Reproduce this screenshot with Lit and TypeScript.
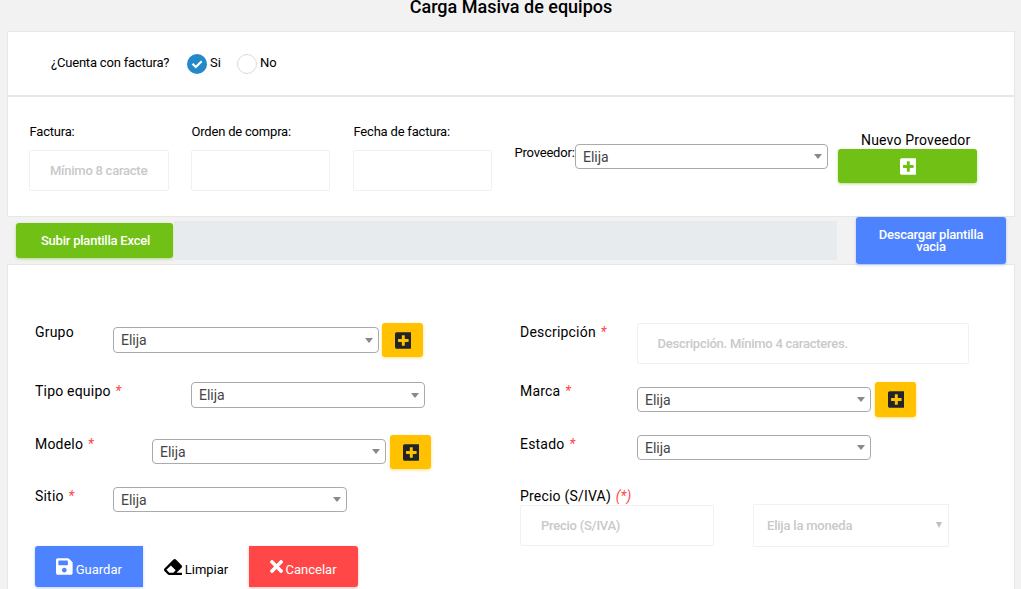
import { LitElement, html, css, svg } from "lit";
import { customElement } from "lit/decorators.js";

const plusPath =
  "M400 32H48C21.500 32 0 53.500 0 80v352c0 26.500 21.500 48 48 48h352c26.500 0 48-21.500 48-48V80c0-26.500-21.500-48-48-48zm-32 252c0 6.600-5.400 12-12 12h-92v92c0 6.600-5.400 12-12 12h-56c-6.600 0-12-5.400-12-12v-92H92c-6.600 0-12-5.400-12-12v-56c0-6.600 5.400-12 12-12h92v-92c0-6.600 5.400-12 12-12h56c6.600 0 12 5.400 12 12v92h92c6.600 0 12 5.400 12 12v56z";
const savePath =
  "M433.941 129.941l-83.882-83.882A48 48 0 0 0 316.118 32H48C21.490 32 0 53.490 0 80v352c0 26.510 21.490 48 48 48h352c26.510 0 48-21.490 48-48V163.882a48 48 0 0 0-14.059-33.941zM224 416c-35.346 0-64-28.654-64-64 0-35.346 28.654-64 64-64s64 28.654 64 64c0 35.346-28.654 64-64 64zm96-304.520V212c0 6.627-5.373 12-12 12H76c-6.627 0-12-5.373-12-12V108c0-6.627 5.373-12 12-12h228.520c3.183 0 6.235 1.264 8.485 3.515l3.480 3.480A11.996 11.996 0 0 1 320 111.480z";
const eraserPath =
  "M497.941 273.941c18.745-18.745 18.745-49.137 0-67.882l-160-160c-18.745-18.745-49.136-18.746-67.883 0l-256 256c-18.745 18.745-18.745 49.137 0 67.882l96 96A48.004 48.004 0 0 0 144 480h356c6.627 0 12-5.373 12-12v-40c0-6.627-5.373-12-12-12H355.883l142.058-142.059zm-302.627-62.627l137.373 137.373L265.373 416H150.628l-80-80 124.686-124.686z";
const timesPath =
  "M242.720 256l100.070-100.070c12.280-12.280 12.280-32.190 0-44.480l-22.240-22.240c-12.280-12.280-32.190-12.280-44.480 0L176 189.280 75.930 89.210c-12.280-12.280-32.190-12.280-44.480 0L9.210 111.450c-12.280 12.280-12.280 32.190 0 44.480L109.280 256 9.210 356.070c-12.280 12.280-12.280 32.190 0 44.480l22.240 22.240c12.280 12.280 32.200 12.280 44.480 0L176 322.720l100.070 100.070c12.280 12.280 32.200 12.280 44.480 0l22.240-22.240c12.280-12.280 12.280-32.190 0-44.480L242.720 256z";

const icon = (path: string, width: number, cls = "") => html`<svg
  class="icon ${cls}"
  viewBox="0 0 ${width} 512"
>${svg`<path d=${path} fill="currentColor"></path>`}</svg>`;

const picker = (cls: string) =>
  html`<div class="picker ${cls}"><span>Elija</span><i class="caret"></i></div>`;

const addButton = (cls: string) =>
  html`<button class="btn add ${cls}">${icon(plusPath, 448)}</button>`;

const star = html`<em>*</em>`;

@customElement("app-root")
export class AppRoot extends LitElement {
  static styles = css`
    :host {
      display: block;
      height: 589px;
      overflow: hidden;
      background: #f2f2f2;
      color: #000;
      font-family: Roboto, "Liberation Sans", sans-serif;
      font-size: 14px;
    }
    * { box-sizing: border-box; }
    main { width: 1008px; margin-left: 7px; }
    h1 {
      margin: 0;
      height: 31px;
      font-size: 18px;
      font-weight: 500;
      line-height: 14px;
      text-align: center;
    }
    .card { background: #fff; border: 1px solid #e5e7e9; }
    .question {
      height: 65px;
      display: flex;
      align-items: center;
      padding: 0 0 0 43px;
      font-size: 13px;
    }
    .question .text { width: 136px; line-height: 18px; margin-top: -2px; letter-spacing: -0.200px; }
    .option { display: flex; align-items: center; width: 50px; gap: 3px; }
    .option span { margin-top: -2px; }
    .radio {
      width: 20px;
      height: 20px;
      flex: none;
      border-radius: 50%;
      border: 1px solid #dbdbd6;
    }
    .radio.on { border: 0; background: #2489c9; }
    .radio svg { display: block; width: 20px; height: 20px; }
    .invoice {
      height: 121px;
      display: flex;
      align-items: flex-start;
      padding: 26px 0 0 21px;
      font-size: 13px;
      letter-spacing: -0.200px;
    }
    .field { width: 140px; margin-right: 22px; display: flex; flex-direction: column; }
    .field.narrow { width: 139px; margin-right: 23px; }
    .field.last { margin-right: 22px; }
    .field label { height: 27px; line-height: 18px; padding-left: 0.500px; }
    .invoice .supplier { width: 61px; margin-top: 21px; padding-left: 0.500px; line-height: 18px; white-space: nowrap; }
    input {
      display: block;
      width: 100%;
      height: 41px;
      padding: 0 20px;
      border: 1px solid #f1f1f1;
      border-radius: 2px;
      background: #fff;
      font: 500 13px Roboto, "Liberation Sans", sans-serif;
      letter-spacing: -0.250px;
      outline: none;
    }
    input::placeholder { color: #c9c9c9; opacity: 1; }
    .picker {
      flex: none;
      display: flex;
      align-items: center;
      justify-content: space-between;
      height: 25px;
      padding: 0 5px 0 7px;
      border: 1px solid #aaa;
      border-radius: 4px;
      background: #fff;
      color: #444;
      font-size: 14px;
      letter-spacing: 0;
    }
    .caret {
      width: 0;
      height: 0;
      border: 4px solid transparent;
      border-top: 5px solid #888;
      border-bottom: 0;
    }
    .tall { height: 26px; }
    .w253 { width: 253px; margin-top: 21px; }
    .w266 { width: 266px; margin-top: 4px; }
    .w234 { width: 234px; }
    .down4 { margin-top: 4px; }
    .down5 { margin-top: 5px; }
    .new-supplier {
      width: 139px;
      margin: 8px 0 0 10px;
      display: flex;
      flex-direction: column;
    }
    .new-supplier span {
      height: 18px;
      line-height: 18px;
      padding-left: 23px;
      font-size: 14px;
      letter-spacing: 0.180px;
      white-space: nowrap;
    }
    .btn {
      display: flex;
      flex: none;
      align-items: center;
      justify-content: center;
      padding: 0;
      border: 0;
      border-radius: 3px;
      color: #fff;
      font: 500 13px Roboto, "Liberation Sans", sans-serif;
      letter-spacing: -0.220px;
      box-shadow: 0 1px 3px rgba(0, 0, 0, 0.120);
    }
    .icon { display: block; height: 19px; }
    .green { background: #71c016; box-shadow: 0 1px 3px rgba(113, 192, 22, 0.500); }
    .blue { background: #4d83ff; box-shadow: 0 1px 3px rgba(77, 131, 255, 0.400); }
    .red { background: #ff4747; box-shadow: 0 1px 3px rgba(255, 71, 71, 0.400); }
    .new-supplier .btn { height: 34px; padding-left: 1px; }
    .template { height: 47px; display: flex; align-items: flex-start; padding-left: 9px; }
    .upload { width: 157px; height: 35px; margin-top: 6px; padding-left: 2px; }
    .file { width: 663px; height: 39px; margin: 4px 19px 0 1px; background: #e8ebee; }
    .download { width: 150px; height: 47px; padding: 0 20px; line-height: 12px; }
    .equipment {
      height: 340px;
      display: grid;
      grid-template-columns: 485px 485px;
      padding: 58px 0 0 27px;
    }
    .column { display: grid; grid-template-rows: 59px 53px 52px 59px 60px; }
    .row { display: flex; align-items: flex-start; }
    .row label {
      flex: none;
      line-height: 18px;
      letter-spacing: 0.200px;
      white-space: nowrap;
    }
    em { color: #ff4747; margin-left: 1px; }
    .l78 { width: 78px; }
    .l117 { width: 117px; }
    .l156 { width: 156px; }
    .add {
      width: 41px;
      height: 34px;
      margin-left: 4px;
      padding-left: 1px;
      background: #ffc100;
      color: #212529;
      box-shadow: 0 1px 3px rgba(255, 193, 0, 0.500);
    }
    .add.close { margin-left: 3px; }
    .add.high { height: 35px; }
    .row .description { width: 332px; padding-left: 19.500px; }
    .price { width: 194px; }
    .currency {
      width: 196px;
      height: 43px;
      margin: 17px 0 0 39px;
      padding: 0 6px 0 13px;
      display: flex;
      align-items: center;
      justify-content: space-between;
      border: 1px solid #f1f1f1;
      color: #c9c9c9;
      font-size: 13px;
      font-weight: 500;
      letter-spacing: -0.200px;
    }
    .currency i {
      margin-top: -2px;
      border: 3.500px solid transparent;
      border-top: 6px solid #c0c0c0;
      border-bottom: 0;
    }
    .action { width: 108px; height: 41px; gap: 3px; font-weight: 400; letter-spacing: 0; }
    .action span { padding-top: 5px; }
    .action.blue { border-radius: 3px 0 0 3px; }
    .action.red { width: 109px; border-radius: 0 3px 3px 0; gap: 2px; }
    .action.clear { width: 106px; background: none; box-shadow: none; color: #000; }
    .clear .icon { height: 18px; }
  `;

  render() {
    return html`<main>
      <h1>Carga Masiva de equipos</h1>
      <section class="card question">
        <span class="text">¿Cuenta con factura?</span>
        <div class="option">
          <i class="radio on"><svg viewBox="0 0 20 20"><path d="M5.500 9.700 8.800 13 14.700 7.200" fill="none" stroke="#fff" stroke-width="2.200"></path></svg></i>
          <span>Si</span>
        </div>
        <div class="option"><i class="radio"></i><span>No</span></div>
      </section>
      <section class="card invoice">
        <div class="field"><label>Factura:</label><input placeholder="Mínimo 8 caracteres" /></div>
        <div class="field narrow"><label>Orden de compra:</label><input /></div>
        <div class="field narrow last"><label>Fecha de factura:</label><input /></div>
        <span class="supplier">Proveedor:</span>
        ${picker("w253")}
        <div class="new-supplier">
          <span>Nuevo Proveedor</span>
          <button class="btn green">${icon(plusPath, 448)}</button>
        </div>
      </section>
      <section class="template">
        <button class="btn green upload">Subir plantilla Excel</button>
        <div class="file"></div>
        <button class="btn blue download">Descargar plantilla vacia</button>
      </section>
      <section class="card equipment">
        <div class="column">
          <div class="row"><label class="l78">Grupo</label>${picker("w266 tall")}${addButton("close")}</div>
          <div class="row"><label class="l156">Tipo equipo ${star}</label>${picker("w234 tall")}</div>
          <div class="row"><label class="l117">Modelo ${star}</label>${picker("w234 down4")}${addButton("")}</div>
          <div class="row"><label class="l78">Sitio ${star}</label>${picker("w234")}</div>
          <div class="row">
            <button class="btn action blue">${icon(savePath, 448)}<span>Guardar</span></button>
            <button class="btn action clear">${icon(eraserPath, 512)}<span>Limpiar</span></button>
            <button class="btn action red">${icon(timesPath, 352)}<span>Cancelar</span></button>
          </div>
        </div>
        <div class="column">
          <div class="row"><label class="l117">Descripción ${star}</label><input class="description" placeholder="Descripción. Mínimo 4 caracteres." /></div>
          <div class="row"><label class="l117">Marca ${star}</label>${picker("w234 down5")}${addButton("high")}</div>
          <div class="row"><label class="l117">Estado ${star}</label>${picker("w234")}</div>
          <div class="row">
            <div class="price"><label>Precio (S/IVA) <em>(*)</em></label><input placeholder="Precio (S/IVA)" /></div>
            <div class="currency"><span>Elija la moneda</span><i></i></div>
          </div>
        </div>
      </section>
    </main>`;
  }
}
